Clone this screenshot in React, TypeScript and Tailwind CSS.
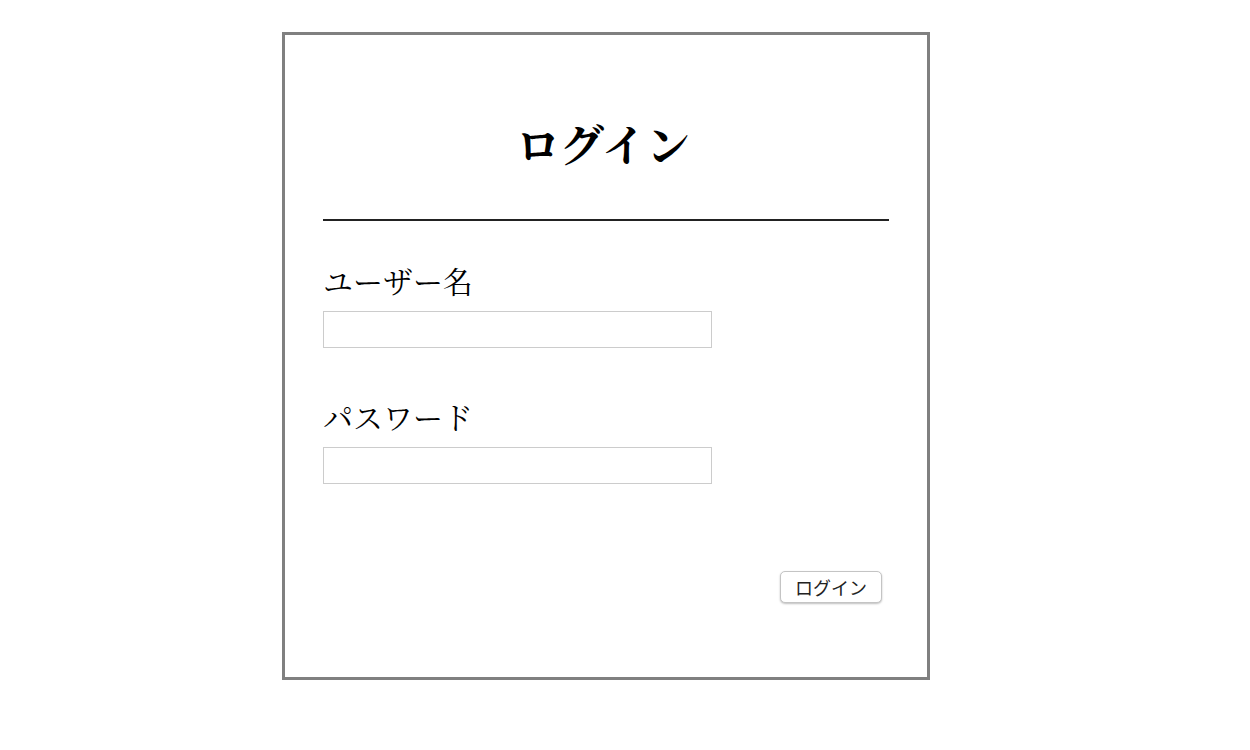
import React from 'react';

const serif = "font-['Noto_Serif_CJK_JP','Liberation_Serif','Noto_Sans_CJK_JP',serif]";

const Field = ({ label, type, className }: { label: string; type: string; className: string }) => (
    <div className={`flex flex-col ${className}`}>
        <label className={`${serif} text-[30px] leading-[30px] text-black`}>{label}</label>
        <input
            type={type}
            className="mt-[16px] w-[389px] h-[37px] border border-[#cccccc] bg-white outline-none px-2"
        />
    </div>
);

const App = () => {
    return (
        <div className="min-h-[750px] bg-white pt-[32px] pl-[282px]">
            <div className="w-[648px] h-[648px] border-[3px] border-[#808080] px-[38px] flex flex-col">
                <h1 className={`${serif} mt-[86px] pr-[6px] text-center text-[44px] leading-[44px] font-bold text-black`}>
                    ログイン
                </h1>
                <div className="mt-[54px] h-[2px] bg-[#222222]" />

                <Field label="ユーザー名" type="text" className="mt-[44px]" />
                <Field label="パスワード" type="password" className="mt-[53px]" />

                <div className="mt-[87px] flex justify-end pr-[7px]">
                    <button className="w-[102px] h-[32px] rounded-[5px] border border-[#c4c4c4] bg-white shadow-[0_1px_2px_rgba(0,0,0,0.25)] font-['Noto_Sans_CJK_JP',sans-serif] text-[18px] text-[#222222]">
                        ログイン
                    </button>
                </div>
            </div>
        </div>
    );
};

export default App;
